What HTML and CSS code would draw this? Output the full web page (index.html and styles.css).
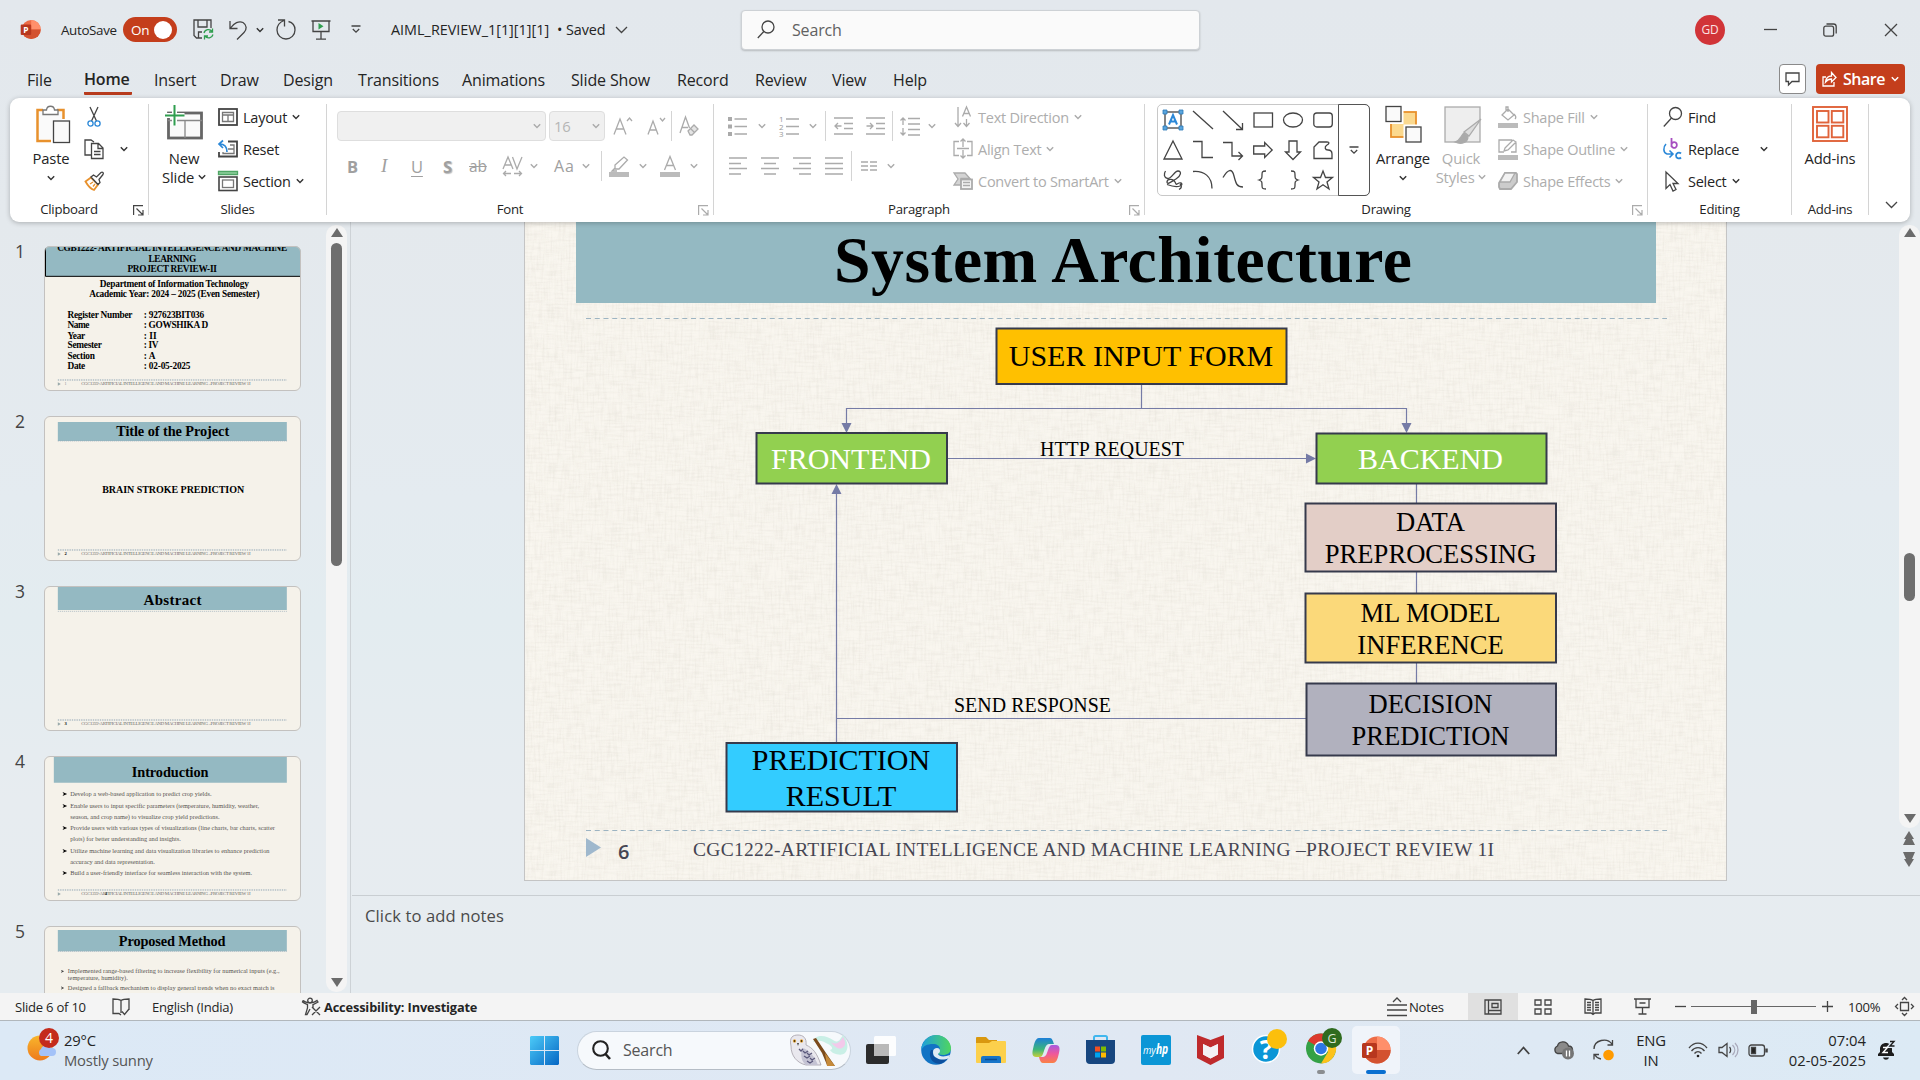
FILE: index.html
```html
<!DOCTYPE html>
<html lang="en">
<head>
<meta charset="utf-8">
<title>AIML_REVIEW_1 - PowerPoint</title>
<link rel="stylesheet" href="styles.css">
</head>
<body>
<svg class="defs" width="0" height="0">
  <symbol id="chev" viewBox="0 0 8 8"><path d="M.8 2.2 4 5.6 7.2 2.2"/></symbol>
  <symbol id="launch" viewBox="0 0 11 11"><path d="M.6 10V.6H10M3.5 3.5 10 10M10 5v5H5"/></symbol>
  <symbol id="pp" viewBox="0 0 30 30">
    <circle cx="16" cy="15" r="13.6" fill="#ed6c47"/><path d="M16 1.400a13.600 13.600 0 0 1 13.600 13.600H16z" fill="#ff8f6b"/><path d="M2.400 15h27.200a13.600 13.600 0 0 1-27.200 0z" fill="#d35230"/>
    <rect x="1" y="8" width="15" height="15" rx="1.500" fill="#b7371e"/><text x="8.500" y="19.500" text-anchor="middle" font-size="12" font-weight="700" fill="#fff">P</text>
  </symbol>
  <symbol id="foot" viewBox="0 0 770 34">
    <path d="M41 5H728" stroke="#8fa3b3" stroke-width="3" stroke-dasharray="4 3"/><path d="M41 12l9 5-9 5z" fill="#9aa"/>
    <text x="111" y="20" font-size="14.500" textLength="508" fill="#6f6c6a">CGC1222-ARTIFICIAL INTELLIGENCE AND MACHINE LEARNING –PROJECT REVIEW 1I</text>
  </symbol>
</svg>

<header class="titlebar">
  <svg width="21" height="21"><use href="#pp"/></svg>
  <span class="t13">AutoSave</span>
  <span class="toggle">On<i></i></span>
  <svg class="ic" width="21" height="21" viewBox="0 0 21 21"><path d="M9 19H3.500L1 16.500V1h17v8M5 1v7h9V1M5.500 19v-6H9"/><path d="M11 14a4.500 4.500 0 0 1 8-1.500M19.500 9.500V13H16M20 15.500a4.500 4.500 0 0 1-8 1.500M11.500 20.500V17H15" stroke="#2f9e4f"/></svg>
  <svg class="ic" width="19" height="20" viewBox="0 0 19 20"><path d="M1 1v7.500h7.500M1.500 8C5 3 10 .5 14 2.500c4 2.500 4 7 1 10L8 19.500"/></svg>
  <svg class="ic chev" width="8" height="8"><use href="#chev"/></svg>
  <svg class="ic" width="20" height="21" viewBox="0 0 20 21"><path d="M2 1h6.500v6.500M8 1.500C3 3.500 1 7 1 11a9 9 0 0 0 18 0c0-4-2.500-7.500-6.500-8.500"/></svg>
  <svg class="ic" width="20" height="20" viewBox="0 0 20 20"><path d="M.5 1h19M2 1v10.500h16V1M10 11.500V19M5 19.200h10"/><path d="M7.500 3v6.500l5-3.200z" fill="#2f9e4f" stroke="none"/></svg>
  <svg class="ic" width="10" height="9" viewBox="0 0 10 9"><path d="M.5 1h9M1.800 4 5 7.200 8.200 4"/></svg>
  <span class="t14 file">AIML_REVIEW_1[1][1][1]</span>
  <span class="t14">• Saved</span>
  <svg class="ic" width="13" height="8" viewBox="0 0 13 8"><path d="M1 1l5.500 5.500L12 1"/></svg>
  <div class="search"><svg class="ic" width="18" height="19" viewBox="0 0 18 19"><circle cx="11" cy="7" r="6"/><path d="M6.800 11.500.8 18"/></svg><span>Search</span></div>
  <span class="avatar">GD</span>
  <svg class="ic" width="13" height="4" viewBox="0 0 13 4"><path d="M0 1.500h13"/></svg>
  <svg class="ic" width="14" height="14" viewBox="0 0 14 14"><rect x=".8" y="3.200" width="9.800" height="10" rx="2"/><path d="M3.500 1h7a2.700 2.700 0 0 1 2.700 2.700V10.500"/></svg>
  <svg class="ic" width="14" height="14" viewBox="0 0 14 14"><path d="M1 1l12 12M13 1 1 13"/></svg>
</header>

<nav class="tabs">
  <span>File</span><span class="on">Home</span><span>Insert</span><span>Draw</span><span>Design</span><span>Transitions</span><span>Animations</span><span>Slide Show</span><span>Record</span><span>Review</span><span>View</span><span>Help</span>
  <button class="comment"><svg class="ic" width="15" height="14" viewBox="0 0 15 14"><path d="M1 1h13v8.500H7L3.500 13V9.500H1z"/></svg></button>
  <button class="share"><svg class="ic" width="15" height="16" viewBox="0 0 15 16"><path d="M4 6H1v9h11v-4M3.500 11c.5-4 3-6 6-6V1.500l4.500 5-4.500 4.500V8c-3 0-4.500 1-6 3z"/></svg><span>Share</span><svg class="ic chev" width="8" height="8"><use href="#chev"/></svg></button>
</nav>

<section class="ribbon">
  <div class="group g-clip">
    <div class="body">
      <div class="big"><svg class="ic" width="36" height="38" viewBox="0 0 36 38"><path d="M8 5H2.500v31H16M22 5h6.500v9" stroke="#e8912d" stroke-width="2.500"/><path d="M4 7h23v8h-9v19H4z" fill="#fafafa" stroke="none"/><path d="M8 9.500V5h3.500c.5-5 7.500-5 8 0H23v4.500z" fill="#fff" stroke="#777"/><rect x="18.500" y="16" width="16" height="21.500" fill="#fafafa"/></svg><span>Paste</span><svg class="ic chev" width="8" height="8"><use href="#chev"/></svg></div>
      <div class="rows3">
        <div><svg class="ic" width="20" height="20" viewBox="0 0 20 20"><path d="M6 0l6.500 14M14 0 7.500 14"/><circle cx="6.500" cy="16.500" r="2.600" stroke="#2b88d8"/><circle cx="13.500" cy="16.500" r="2.600" stroke="#2b88d8"/></svg></div>
        <div class="copyrow"><svg class="ic" width="20" height="20" viewBox="0 0 20 20"><path d="M7 16H1V1h6l3 2M7.500 4.500h7L19 9v10.500H7.500zM14 5v4.500h5M10 12.500h6.500M10 15.500h6.500"/></svg><svg class="ic chev" width="8" height="8"><use href="#chev"/></svg></div>
        <div><svg class="ic" width="20" height="20" viewBox="0 0 20 20"><path d="M1.500 10.500 7 6.500l7 7-4 5.500c-3-1-6-4-8.500-8.500z" fill="#fff" stroke="#e8912d" stroke-width="1.800"/><path d="M9 15.500 11 13M6 13l3-2" stroke="#e8912d"/><path d="M7 6l2.500-2 3 2L17 1.500c1.500-1 3 .5 2 2L15 8.500l1 3-2 2z" fill="#fff"/></svg></div>
      </div>
    </div>
    <div class="label"><span>Clipboard</span><svg class="ic" width="11" height="11"><use href="#launch"/></svg></div>
  </div>
  <i class="sep"></i>
  <div class="group g-slides">
    <div class="body">
      <div class="big"><svg class="ic" width="38" height="38" viewBox="0 0 38 38"><rect x="3.500" y="8" width="33" height="25" stroke="#666" stroke-width="2.800" fill="#fafafa"/><path d="M3 15.500h34M20 16v17" stroke="#888"/><path d="M0 10.500h19.500M9.500 0v20.500" stroke="#fff" stroke-width="5"/><path d="M0 10.500h19.500M9.500 0v20.500" stroke="#2f9e4f" stroke-width="2"/></svg><span>New</span><span>Slide <svg class="ic chev" width="8" height="8"><use href="#chev"/></svg></span></div>
      <div class="rows3 wide">
        <div><svg class="ic" width="20" height="18" viewBox="0 0 20 18"><rect x="1" y="1" width="18" height="16" stroke-width="1.800"/><path d="M4.500 4.500h11v9h-11zM4.500 7h11M10 7v6.500" stroke="#777"/></svg><span>Layout</span><svg class="ic chev" width="8" height="8"><use href="#chev"/></svg></div>
        <div><svg class="ic" width="20" height="18" viewBox="0 0 20 18"><path d="M10 1.500h9v15H1V12" stroke-width="1.800"/><path d="M12 5h4v8.500H5V12M10 9h6" stroke="#777"/><path d="M5 .5 1 4l4 4M1.500 4C6 4 9 6 9 12" stroke="#2b88d8" stroke-width="1.700"/></svg><span>Reset</span></div>
        <div><svg class="ic" width="20" height="20" viewBox="0 0 20 20"><path d="M.5.500h19v3H.5z" fill="#8fd19e" stroke="#4fa565"/><rect x="1" y="6" width="18" height="13.500" stroke-width="1.600"/><rect x="4.500" y="9" width="11" height="7.500" stroke="#777"/></svg><span>Section</span><svg class="ic chev" width="8" height="8"><use href="#chev"/></svg></div>
      </div>
    </div>
    <div class="label"><span>Slides</span></div>
  </div>
  <i class="sep"></i>
  <div class="group g-font off">
    <div class="body">
      <div class="frow f1">
        <div class="combo"><svg class="ic chev" width="8" height="8"><use href="#chev"/></svg></div>
        <div class="combo"><span>16</span><svg class="ic chev" width="8" height="8"><use href="#chev"/></svg></div>
        <svg class="ic" width="20" height="20" viewBox="0 0 20 20"><path d="M1 18.500 7 3l6 15.500M3 13h8M14 5l2.500-3L19 5"/></svg>
        <svg class="ic" width="19" height="20" viewBox="0 0 19 20"><path d="M1 18.500 6 5l5 13.500M3 14h6M13 2l2.500 3L18 2"/></svg>
        <i class="vs"></i>
        <svg class="ic" width="20" height="20" viewBox="0 0 20 20"><path d="M1 17 6.500 1l4 11M3 11.500h6"/><path d="M9 15l6-6 4 4-6 6h-2z" fill="#e4e4e4"/><path d="M11.500 12.500l4 4"/></svg>
      </div>
      <div class="frow f2">
        <b>B</b><em>I</em><u>U</u><b class="shadow">S</b><s>ab</s>
        <svg class="ic" width="21" height="21" viewBox="0 0 21 21"><path d="M1 13 6 1l5 12M3 9h6M10.500 1l4.500 12L20 1M4 15l-2.500 2.500L4 20M2 17.500h7M17 15l2.500 2.500L17 20M19 17.500h-7"/></svg>
        <svg class="ic chev" width="8" height="8"><use href="#chev"/></svg>
        <span class="aa">Aa</span><svg class="ic chev" width="8" height="8"><use href="#chev"/></svg>
        <i class="vs"></i>
        <svg class="ic" width="20" height="21" viewBox="0 0 20 21"><path d="M6 9l9-8 3.500 3L10 13H6zM6 12l-3 3h5"/><path d="M0 16h20v5H0z" fill="#bbb" stroke="none"/></svg>
        <svg class="ic chev" width="8" height="8"><use href="#chev"/></svg>
        <svg class="ic" width="20" height="21" viewBox="0 0 20 21"><path d="M4.500 14 10 .5 15.500 14M6.500 9.500h7"/><path d="M0 16h20v5H0z" fill="#bbb" stroke="none"/></svg>
        <svg class="ic chev" width="8" height="8"><use href="#chev"/></svg>
      </div>
    </div>
    <div class="label"><span>Font</span><svg class="ic" width="11" height="11"><use href="#launch"/></svg></div>
  </div>
  <i class="sep"></i>
  <div class="group g-para off">
    <div class="body">
      <div class="pleft">
        <div class="frow p1">
          <svg class="ic" width="19" height="20" viewBox="0 0 19 20"><path d="M6.500 3H19M6.500 10.500H19M6.500 18H19"/><path d="M0 1h4v4H0zM0 8.500h4v4H0zM0 16h4v4H0z" fill="#aaa" stroke="none"/></svg>
          <svg class="ic chev" width="8" height="8"><use href="#chev"/></svg>
          <svg class="ic" width="20" height="22" viewBox="0 0 20 22"><path d="M7 4H20M7 11.500H20M7 19H20"/><g class="num"><text x="0" y="7">1</text><text x="0" y="14.500">2</text><text x="0" y="22">3</text></g></svg>
          <svg class="ic chev" width="8" height="8"><use href="#chev"/></svg>
          <i class="vs"></i>
          <svg class="ic" width="19" height="18" viewBox="0 0 19 18"><path d="M0 1h19M10 6.500h9M10 11.500h9M0 17h19M7.500 9H1M4 6 1 9l3 3"/></svg>
          <svg class="ic" width="19" height="18" viewBox="0 0 19 18"><path d="M0 1h19M10 6.500h9M10 11.500h9M0 17h19M.5 9H7M4 6l3 3-3 3"/></svg>
          <i class="vs"></i>
          <svg class="ic" width="20" height="19" viewBox="0 0 20 19"><path d="M8 1.500h12M8 7h12M8 12.500h12M8 18h12M3 1v7M.5 3.500 3 1l2.500 2.500M3 18v-7M.5 15.500 3 18l2.500-2.500"/></svg>
          <svg class="ic chev" width="8" height="8"><use href="#chev"/></svg>
        </div>
        <div class="frow p2">
          <svg class="ic" width="18" height="18" viewBox="0 0 18 18"><path d="M0 1h18M0 6.500h12M0 11.500h18M0 17h12"/></svg>
          <svg class="ic" width="18" height="18" viewBox="0 0 18 18"><path d="M0 1h18M3 6.500h12M0 11.500h18M3 17h12"/></svg>
          <svg class="ic" width="18" height="18" viewBox="0 0 18 18"><path d="M0 1h18M6 6.500h12M0 11.500h18M6 17h12"/></svg>
          <svg class="ic" width="18" height="18" viewBox="0 0 18 18"><path d="M0 1h18M0 6.500h18M0 11.500h18M0 17h18"/></svg>
          <i class="vs"></i>
          <svg class="ic" width="16" height="10" viewBox="0 0 16 10"><path d="M0 1h7M0 5h7M0 9h7M9 1h7M9 5h7M9 9h7"/></svg>
          <svg class="ic chev" width="8" height="8"><use href="#chev"/></svg>
        </div>
      </div>
      <div class="rows3 wide">
        <div><svg class="ic" width="20" height="22" viewBox="0 0 20 22"><path d="M5 1v19M2 17l3 3.500L8 17M9.500 10.500 13.500 1l4 9.500M11 7.500h5M13.500 13v7M10.500 17l3 3.500 3-3.500"/></svg><span>Text Direction</span><svg class="ic chev" width="8" height="8"><use href="#chev"/></svg></div>
        <div><svg class="ic" width="20" height="20" viewBox="0 0 20 20"><path d="M6 2.500H1v14h5M14 2.500h5v14h-5M4 9.500h12M10 0v8M7.500 2.500 10 0l2.500 2.500M10 11v8M7.500 16.500 10 19l2.500-2.500"/></svg><span>Align Text</span><svg class="ic chev" width="8" height="8"><use href="#chev"/></svg></div>
        <div><svg class="ic" width="20" height="18" viewBox="0 0 20 18"><path d="M1 1h11l5 5.500H8V13H1l4-6z" fill="#d4d4d4"/><rect x="8" y="7.500" width="11" height="9.500" fill="#f4f4f4" stroke-width="1.800"/><path d="M10 10.500h7M10 13.500h7"/></svg><span>Convert to SmartArt</span><svg class="ic chev" width="8" height="8"><use href="#chev"/></svg></div>
      </div>
    </div>
    <div class="label"><span>Paragraph</span><svg class="ic" width="11" height="11"><use href="#launch"/></svg></div>
  </div>
  <i class="sep"></i>
  <div class="group g-draw">
    <div class="body">
      <div class="gallery">
        <div class="shapes">
          <svg class="ic" viewBox="0 0 20 20"><rect x="2" y="2" width="16" height="16"/><path d="M0 0h4v4H0zM16 0h4v4h-4zM0 16h4v4H0zM16 16h4v4h-4z" fill="#5aa6de" stroke="#2b79b8" stroke-width=".8"/><path d="M6 14.500 10 5l4 9.500M7.500 11.500h5" stroke="#2b88d8" stroke-width="2"/></svg>
          <svg class="ic" viewBox="0 0 20 20"><path d="M0 1l20 18"/></svg>
          <svg class="ic" viewBox="0 0 20 20"><path d="M0 1l19 18M19.500 13v6.500H13"/></svg>
          <svg class="ic" viewBox="0 0 20 20"><rect x="1" y="3" width="18.500" height="14"/></svg>
          <svg class="ic" viewBox="0 0 20 20"><ellipse cx="10" cy="10" rx="9.500" ry="7"/></svg>
          <svg class="ic" viewBox="0 0 20 20"><rect x=".8" y="3" width="18.500" height="14" rx="3"/></svg>
          <svg class="ic" viewBox="0 0 20 20"><path d="M10 1l9 18H1z"/></svg>
          <svg class="ic" viewBox="0 0 20 20"><path d="M0 1.500h9v16h11"/></svg>
          <svg class="ic" viewBox="0 0 20 20"><path d="M0 2.500h9V16h10M15.500 12l4 4-4 4"/></svg>
          <svg class="ic" viewBox="0 0 20 20"><path d="M.7 6h11V2.500l7.500 7.500-7.500 7.500V14H.7z"/></svg>
          <svg class="ic" viewBox="0 0 20 20"><path d="M6 1h8v11h3.500L10 19.500 2.500 12H6z"/></svg>
          <svg class="ic" viewBox="0 0 20 20"><path d="M1 18.500V7l5-5h8c3 0 2 2 0 3-3 2-2 5 1 5 3 0 4 2 4 4v4.500z"/></svg>
          <svg class="ic" viewBox="0 0 20 20"><path d="M2.500 1c-2 3-1.500 7 2 7.500C9 9 11 1 15 1s3 5-2 8-9 6-9 3 6-4 8 0 1 2 4 1 4 2 1 3-9 0-13-1.500M17 14c2 2 2 4-1 5.500"/></svg>
          <svg class="ic" viewBox="0 0 20 20"><path d="M0 1.500c11-1 19 5 19 17"/></svg>
          <svg class="ic" viewBox="0 0 20 20"><path d="M0 7.500C5-1 9-2 11 6s3 11 9 11"/></svg>
          <svg class="ic" viewBox="0 0 20 20"><path d="M13 1c-4 0-4 1-4 4s0 4-3 5c3 1 3 2 3 5s0 4 4 4"/></svg>
          <svg class="ic" viewBox="0 0 20 20"><path d="M8 1c4 0 4 1 4 4s0 4 3 5c-3 1-3 2-3 5s0 4-4 4"/></svg>
          <svg class="ic" viewBox="0 0 20 20"><path d="M10 1l2.500 6.500H19.500L14 12l2 7-6-4.200L4 19l2-7L.5 7.500h7z"/></svg>
        </div>
        <div class="more"><svg class="ic" width="10" height="9" viewBox="0 0 10 9"><path d="M.5 1h9M1.800 4 5 7.200 8.200 4"/></svg></div>
      </div>
      <div class="big arr"><svg class="ic" width="37" height="38" viewBox="0 0 37 38"><rect x="6" y="7" width="25" height="25" fill="#fbd98f" stroke="#e8912d" stroke-width="1.800"/><rect x="1" y="1.500" width="15" height="15" fill="#fafafa" stroke="#fff" stroke-width="5"/><rect x="1" y="1.500" width="15" height="15" fill="#fafafa"/><rect x="21" y="22" width="15" height="15" fill="#fafafa" stroke="#fff" stroke-width="5"/><rect x="21" y="22" width="15" height="15" fill="#fafafa"/></svg><span>Arrange</span><svg class="ic chev" width="8" height="8"><use href="#chev"/></svg></div>
      <div class="big quick off"><svg class="ic" width="38" height="40" viewBox="0 0 38 40"><rect x="1" y="2" width="35" height="35" fill="#eee"/><path d="M37 14 25 31l-5-4z" fill="#ddd"/><path d="M20 28c-3 2-3 7-9 9 6 3 13 1 13-6z" fill="#aaa"/></svg><span>Quick</span><span>Styles <svg class="ic chev" width="8" height="8"><use href="#chev"/></svg></span></div>
      <div class="rows3 wide off">
        <div><svg class="ic" width="20" height="22" viewBox="0 0 20 22"><path d="M4 9l6-6 6 6-6 5zM8 5V1h2v5M16 8c2 2 2 4 1 5"/><path d="M0 17h20v5H0z" fill="#bbb" stroke="none"/></svg><span>Shape Fill</span><svg class="ic chev" width="8" height="8"><use href="#chev"/></svg></div>
        <div><svg class="ic" width="20" height="22" viewBox="0 0 20 22"><path d="M14 2H1v12h5M18 5v9h-5M7 10l8-8 3 2-8 8-4 1z"/><path d="M0 17h20v5H0z" fill="#bbb" stroke="none"/></svg><span>Shape Outline</span><svg class="ic chev" width="8" height="8"><use href="#chev"/></svg></div>
        <div><svg class="ic" width="20" height="20" viewBox="0 0 20 20"><path d="M7 2h11l1 1v8l-6 7H2l-1-2v-4z" fill="#ccc" stroke-width="1.800"/><path d="M7 2h10l-5 9H2z" fill="#f2f2f2"/></svg><span>Shape Effects</span><svg class="ic chev" width="8" height="8"><use href="#chev"/></svg></div>
      </div>
    </div>
    <div class="label"><span>Drawing</span><svg class="ic lt" width="11" height="11"><use href="#launch"/></svg></div>
  </div>
  <i class="sep"></i>
  <div class="group g-edit">
    <div class="body">
      <div class="rows3 wide">
        <div><svg class="ic" width="20" height="20" viewBox="0 0 20 20"><circle cx="12.500" cy="6.500" r="6"/><path d="M8.500 11 .8 19.500"/></svg><span>Find</span></div>
        <div><svg class="ic" width="20" height="22" viewBox="0 0 20 22"><path d="M8.500 0v9M8.500 6.500a2.700 2.900 0 1 1 0 1" stroke="#a74fc0" stroke-width="1.800"/><path d="M18 15.500c-2-2-5-.5-5 2s3 4 5 2" stroke="#2b88d8" stroke-width="1.800"/><path d="M3 6c-3 3-3 9 1 10h5M6.500 12.500 10 16l-3.500 3.500" stroke="#2b88d8" stroke-width="1.600"/></svg><span>Replace</span><svg class="ic chev rep" width="8" height="8"><use href="#chev"/></svg></div>
        <div><svg class="ic" width="20" height="21" viewBox="0 0 20 21"><path d="M3 1v16.500l4-4 3 6.500 3-1.500-3-6h5z"/></svg><span>Select</span><svg class="ic chev" width="8" height="8"><use href="#chev"/></svg></div>
      </div>
    </div>
    <div class="label"><span>Editing</span></div>
  </div>
  <i class="sep"></i>
  <div class="group g-add">
    <div class="body">
      <div class="big"><svg class="ic" width="36" height="38" viewBox="0 0 36 38"><g stroke="#e0633a" stroke-width="1.900"><rect x="1" y="2" width="34" height="34"/><rect x="5" y="6" width="11.500" height="11.500"/><rect x="19.800" y="6" width="11.500" height="11.500"/><rect x="5" y="20.800" width="11.500" height="11.500"/><rect x="19.800" y="20.800" width="11.500" height="11.500"/></g></svg><span>Add-ins</span></div>
    </div>
    <div class="label"><span>Add-ins</span></div>
  </div>
  <i class="sep"></i>
  <div class="collapse"><svg class="ic" width="13" height="8" viewBox="0 0 13 8"><path d="M1 1l5.500 5.500L12 1"/></svg></div>
</section>

<main class="work">
  <aside class="panel">
    <div class="list">
      <div class="item"><span>1</span><svg class="thumb" viewBox="0 0 770 435">
        <g transform="translate(-133 -78)"><path d="M133 78h770v91H133z" fill="#94b9c2"/><path d="M137 85v84h766" fill="none" stroke="#000" stroke-width="3"/>
        <g class="bt" font-size="28"><text x="172" y="93" textLength="690">CGB1222- ARTIFICIAL INTELLIGENCE AND MACHINE</text><text x="446" y="125" textLength="143">LEARNING</text><text x="383" y="155" textLength="268">PROJECT REVIEW-II</text>
        <text x="300" y="200" textLength="447">Department of Information Technology</text><text x="268" y="230" textLength="511">Academic Year: 2024 – 2025 (Even Semester)</text>
        <text x="203" y="293" textLength="195">Register Number</text><text x="432" y="293" textLength="181">: 927623BIT036</text><text x="203" y="323" textLength="66">Name</text><text x="432" y="323" textLength="193">: GOWSHIKA D</text><text x="203" y="356" textLength="53">Year</text><text x="432" y="356">: II</text><text x="203" y="383" textLength="103">Semester</text><text x="432" y="383" textLength="44">: IV</text><text x="203" y="416" textLength="82">Section</text><text x="432" y="416">: A</text><text x="203" y="446" textLength="53">Date</text><text x="432" y="446" textLength="140">: 02-05-2025</text></g></g>
        <use href="#foot" y="397" width="770" height="34"/><text x="61" y="417" font-size="12" fill="#888">1</text></svg></div>
      <div class="item"><span>2</span><svg class="thumb" viewBox="0 0 770 435"><path d="M41 18h687v57H41z" fill="#94b9c2"/><path d="M41 75H728" stroke="#8fa3b3" stroke-width="2" stroke-dasharray="3 3"/><g class="bt"><text x="216" y="60" font-size="43" textLength="339">Title of the Project</text><text x="174" y="231" font-size="30" textLength="426">BRAIN STROKE PREDICTION</text><text x="61" y="417" font-size="14">2</text></g><use href="#foot" y="397" width="770" height="34"/></svg></div>
      <div class="item"><span>3</span><svg class="thumb" viewBox="0 0 770 435"><path d="M41 0h687v72H41z" fill="#94b9c2"/><path d="M41 76H728" stroke="#8fa3b3" stroke-width="2" stroke-dasharray="3 3"/><g class="bt"><text x="298" y="58" font-size="45" textLength="174">Abstract</text><text x="61" y="417" font-size="14">3</text></g><use href="#foot" y="397" width="770" height="34"/></svg></div>
      <div class="item"><span>4</span><svg class="thumb" viewBox="0 0 770 435"><path d="M29 0h699v80H29z" fill="#94b9c2"/><text class="bt" x="263" y="64" font-size="43" textLength="230">Introduction</text>
        <g class="st" font-size="19"><text x="78" y="120" textLength="424">Develop a web-based application to predict crop yields.</text><text x="78" y="156" textLength="567">Enable users to input specific parameters (temperature, humidity, weather,</text><text x="78" y="189" textLength="448">season, and crop name) to visualize crop yield predictions.</text><text x="78" y="222" textLength="614">Provide users with various types of visualizations (line charts, bar charts, scatter</text><text x="78" y="255" textLength="332">plots) for better understanding and insights.</text><text x="78" y="291" textLength="598">Utilize machine learning and data visualization libraries to enhance prediction</text><text x="78" y="324" textLength="254">accuracy and data representation.</text><text x="78" y="357" textLength="546">Build a user-friendly interface for seamless interaction with the system.</text></g>
        <path d="M55 108l14 6-14 6 4-6zM55 144l14 6-14 6 4-6zM55 210l14 6-14 6 4-6zM55 279l14 6-14 6 4-6zM55 345l14 6-14 6 4-6z"/><text class="bt" x="182" y="417" font-size="14">4</text><use href="#foot" y="397" width="770" height="34"/></svg></div>
      <div class="item"><span>5</span><svg class="thumb" viewBox="0 0 770 435"><path d="M41 12h687v64H41z" fill="#94b9c2"/><path d="M41 76H728" stroke="#8fa3b3" stroke-width="2" stroke-dasharray="3 3"/><text class="bt" x="224" y="61" font-size="43" textLength="320">Proposed Method</text>
        <g class="st" font-size="19"><text x="71" y="142" textLength="635">Implemented range-based filtering to increase flexibility for numerical inputs (e.g.,</text><text x="71" y="162" textLength="180">temperature, humidity).</text><text x="71" y="192" textLength="620">Designed a fallback mechanism to display general trends when no exact match is</text></g><path d="M50 131l10 5-10 5 3-5zM50 181l10 5-10 5 3-5z" fill="#444"/></svg></div>
    </div>
    <div class="sbar left"><svg width="12" height="9" viewBox="0 0 12 9"><path d="M6 0l6 9H0z"/></svg><i></i><svg class="end" width="12" height="9" viewBox="0 0 12 9"><path d="M6 9 0 0h12z"/></svg></div>
  </aside>
  <section class="editor">
    <div class="stage">
      <svg class="slide" width="1201" height="658" viewBox="525 222 1201 658">
        <path d="M576 222h1080v81H576z" fill="#94b9c2"/>
        <text x="834" y="281.500" font-size="65.700" font-weight="700" textLength="578">System Architecture</text>
        <path d="M586 318.500H1667M586 830.500H1667" stroke="#9db4c2" stroke-dasharray="5 3.750"/>
        <g fill="none" stroke="#757ba6" stroke-width="1.200"><path d="M1141.500 385v23.500M846.500 424v-15.500h560v15.500M948 458.500h360M836.500 742V492M836.500 718.500H1306M1416.500 484v20M1416.500 572v22M1416.500 663v20"/></g>
        <path d="M841.500 423h10l-5 10zM1401.500 423h10l-5 10zM1306 453.500v10l10-5zM831.500 494h10l-5-10z" fill="#757ba6"/>
        <g stroke="#363a4c" stroke-width="2"><rect x="996.500" y="328.500" width="290" height="55.500" fill="#ffc000"/><rect x="756.500" y="433" width="190.500" height="50.500" fill="#92d050"/><rect x="1316.500" y="433.500" width="230" height="50" fill="#92d050"/><rect x="1305.500" y="503.500" width="250.500" height="68" fill="#e3cec7"/><rect x="1305.500" y="593.500" width="250.500" height="69" fill="#fbd97a"/><rect x="1306.500" y="683.500" width="249.500" height="72" fill="#b1b1be"/><rect x="726.500" y="743" width="230.500" height="68.500" fill="#33ccff"/></g>
        <g text-anchor="middle" font-size="30"><text x="1141" y="366">USER INPUT FORM</text><text x="851" y="469" fill="#fff">FRONTEND</text><text x="1430.500" y="469" fill="#fff">BACKEND</text><text x="841" y="770">PREDICTION</text><text x="841" y="806">RESULT</text></g>
        <g text-anchor="middle" font-size="26.600"><text x="1430.500" y="531">DATA</text><text x="1430.500" y="563">PREPROCESSING</text><text x="1430.500" y="622">ML MODEL</text><text x="1430.500" y="654">INFERENCE</text><text x="1430.500" y="713">DECISION</text><text x="1430.500" y="745">PREDICTION</text></g>
        <text x="1040" y="456" font-size="19.900" textLength="144">HTTP REQUEST</text><text x="954" y="712" font-size="19.900" textLength="157">SEND RESPONSE</text>
        <path d="M586 838l15 9.500-15 9.500z" fill="#9fb8cd"/><text class="pg" x="618" y="859" font-size="20">6</text>
        <text x="693" y="856" font-size="19.500" textLength="801" fill="#464653">CGC1222-ARTIFICIAL INTELLIGENCE AND MACHINE LEARNING –PROJECT REVIEW 1I</text>
      </svg>
      <div class="rscroll">
        <div class="sbar right"><svg width="12" height="9" viewBox="0 0 12 9"><path d="M6 0l6 9H0z"/></svg><i></i><svg class="end" width="12" height="9" viewBox="0 0 12 9"><path d="M6 9 0 0h12z"/></svg></div>
        <svg class="dbl" width="12" height="36" viewBox="0 0 12 36"><path d="M6 0l5 8H9l3 6H0l3-6H1zM6 36l-5-8h2L0 21h12l-3 7h2z"/></svg>
      </div>
    </div>
    <div class="notes">Click to add notes</div>
  </section>
</main>

<footer class="status">
  <span>Slide 6 of 10</span>
  <svg class="ic" width="18" height="18" viewBox="0 0 18 18"><path d="M9 15V2.500C7 1 4 1 1 1v14.500h6l2 1.500M9 2.500C11 1 14 1 17 1v11M10 13.500l2.500 3L17 11"/></svg>
  <span>English (India)</span>
  <svg class="ic" width="19" height="19" viewBox="0 0 19 19"><circle cx="8" cy="3.500" r="2.300"/><path d="M1 3.500c3 3 11 3 14 0l1 1.500c-2 1.500-4 2-5 2.500v3M1 3.500 .5 5C3 7 5 7 5.500 7.500V11l-2 6.500H5L8 12M10 10l8 8M18 10l-8 8"/></svg>
  <b>Accessibility: Investigate</b>
  <svg class="ic" width="20" height="20" viewBox="0 0 20 20"><path d="M6 5l4-4 4 4M0 8h20M0 13h20M0 18.500h20"/></svg>
  <span>Notes</span>
  <div class="view"><svg class="ic" width="18" height="16" viewBox="0 0 18 16"><path d="M1 1h16v14H1zM4.500 1v14M4.500 11.500H17M8 4.500h6v4H8z"/></svg></div>
  <svg class="ic" width="18" height="16" viewBox="0 0 18 16"><path d="M1 1h6v5H1zM11 1h6v5h-6zM1 10h6v5H1zM11 10h6v5h-6z"/></svg>
  <svg class="ic" width="18" height="17" viewBox="0 0 18 17"><path d="M9 2.500C7 1 4 1 1 1v14h6l2 1.500 2-1.500h6V1c-3 0-6 0-8 1.500zM9 2v14M3 4.500h4M3 7h4M3 9.500h4M3 12h4M11 4.500h4M11 7h4M11 9.500h4M11 12h4"/></svg>
  <svg class="ic" width="17" height="17" viewBox="0 0 17 17"><path d="M0 1h17M2 1v8.500h13V1M5.500 5h6M8.500 9.500V16M4.500 16h8"/></svg>
  <svg class="ic" width="11" height="11" viewBox="0 0 11 11"><path d="M0 5.500h11"/></svg>
  <div class="zoom"><i></i></div>
  <svg class="ic" width="11" height="11" viewBox="0 0 11 11"><path d="M0 5.500h11M5.500 0v11"/></svg>
  <span>100%</span>
  <svg class="ic" width="19" height="19" viewBox="0 0 19 19"><path d="M5.500 5.500h8v8h-8zM7 3l2.500-2.500L12 3M7 16l2.500 2.500L12 16M3 7 .5 9.500 3 12M16 7l2.500 2.500L16 12"/></svg>
</footer>

<footer class="taskbar">
  <svg width="32" height="36" viewBox="0 0 32 36"><defs><linearGradient id="sun" x2="0" y2="1"><stop stop-color="#f8b62c"/><stop offset="1" stop-color="#ee7a1c"/></linearGradient><linearGradient id="w" x2="1" y2="1"><stop stop-color="#4ccbf8"/><stop offset="1" stop-color="#0667c4"/></linearGradient></defs><circle cx="12" cy="20" r="12.500" fill="url(#sun)"/><path d="M13 28a4 4 0 0 1 0-7 6 5.500 0 0 1 11-1 4 4 0 0 1 0 8z" fill="#a3c2f8"/><circle cx="21" cy="10" r="10" fill="#c42b1c"/><text x="21" y="15" text-anchor="middle" font-size="14" fill="#fff">4</text></svg>
  <div class="weather"><span>29°C</span><span>Mostly sunny</span></div>
  <svg width="29" height="29" viewBox="0 0 29 29"><path d="M1 0h13v14H0V1zM15 0h13l1 1v13H15zM0 15h14v14H1l-1-1zM15 15h14v13l-1 1H15z" fill="url(#w)"/></svg>
  <div class="pill"><svg class="ic" width="19" height="20" viewBox="0 0 19 20"><circle cx="8.500" cy="8.500" r="7.300" stroke-width="2.100"/><path d="M13.500 14l4.500 5" stroke-width="2.600"/></svg><span>Search</span>
    <svg width="58" height="33" viewBox="0 0 58 33"><path d="M23 8C26-1 37 2 43 6s7-1 10-5c5 6 6 14 2 18s-14 0-15-3c4-1 2-4-2-6S30 5 23 8z" fill="#c9efe6"/><path d="M41 8c4 3 8 2 12-5 3 5 3 9-1 11s-8-2-11-6z" fill="#f3c9ea"/><path d="M23 5l3-1 12 18 7 10-8-1-5-12z" fill="#7b4b1d"/><path d="M35 19l10 13-8 0z" fill="#c58a3a"/><path d="M1 12C-1 3 3 1 8 1s9 3 8 10c7 3 11 8 15 20H16C7 29 1 22 1 12z" fill="#e9e8ee" stroke="#a4a0a8" stroke-width=".8"/><path d="M12 14c6 1 12 7 16 17H16c-4-3-6-9-4-17z" fill="#c4c3d3"/><path d="M13 17l2 2 3-2M17 19l2 2 3-2M14 22l3 2 3-2M20 24l2 2 3-2M17 27l3 2 3-2M9 15l2 2 2-2" fill="none" stroke="#5b597c" stroke-width="1.300"/><circle cx="4.500" cy="7" r="1.700" fill="#e7a93c"/><circle cx="11.500" cy="7" r="1.700" fill="#e7a93c"/><circle cx="4.500" cy="7" r=".8"/><circle cx="11.500" cy="7" r=".8"/><path d="M7 9h2l-1 3z" fill="#444"/></svg></div>
  <svg width="31" height="31" viewBox="0 0 31 31"><rect x="0" y="9" width="23" height="20" rx="2" fill="#2c2c2c"/><rect x="8" y="1" width="22" height="20" rx="1.500" fill="#fff" opacity=".9"/><path d="M8 9h15v12H8z" fill="#b9b9b9"/></svg>
  <svg width="30" height="30" viewBox="0 0 30 30"><defs><linearGradient id="e1" x2="1"><stop stop-color="#1f9fdc"/><stop offset="1" stop-color="#4fd65f"/></linearGradient></defs><circle cx="15" cy="15" r="14.800" fill="#1273c4"/><path d="M.5 12C3 4 9 0 15 0c9 0 15 7 15 13 0 5-4 7-8 7-3 0-5-1-5-2 0-1 2-1 2-4 0-3-3-5-7-5-6 0-10 2-11.500 6z" fill="url(#e1)"/><path d="M10 15c-3 5 0 14 9 14 3-1 6-3 8-6-4 2-17 3-15-8z" fill="#0c4f9e"/><path d="M12 17c0-3 2-4 4-4s3 1 3 3-2 2-2 3c1 3 7 3 12 1l-1 3c-4 2-9 2-12 0-3-1-4-3-4-6z" fill="#dfe9f4"/></svg>
  <svg width="30" height="28" viewBox="0 0 30 28"><path d="M0 2q0-1 1-1h9l3 3h8v5H0z" fill="#d9980f"/><path d="M0 7h13l3-2h13q1 0 1 1v20q0 1-1 1H1q-1 0-1-1z" fill="#fcd04c"/><path d="M5 27v-5q0-2 2-2h16q2 0 2 2v5z" fill="#1775c9"/><path d="M9 23.500h12" stroke="#0a4d95" stroke-width="1.500"/></svg>
  <svg width="28" height="27" viewBox="0 0 28 27"><defs><linearGradient id="c1" x2="0" y2="1"><stop stop-color="#1d7fd8"/><stop offset=".6" stop-color="#3bb67a"/><stop offset="1" stop-color="#c6cf3b"/></linearGradient><linearGradient id="c2" x2="0" y2="1"><stop stop-color="#a65be0"/><stop offset=".5" stop-color="#f0589a"/><stop offset="1" stop-color="#fa8145"/></linearGradient></defs><path d="M7 1h11c2 0 3 3 4 6h-5c-3 0-4 4-5 7s-2 6-4 6H4c-4 0-4-4-3-8S3 1 7 1z" fill="url(#c1)"/><path d="M21 26H11c-2 0-3-2-4-6h4c3 0 4-4 5-7s2-5 4-5h4c4 0 4 4 3 8s-2 10-6 10z" fill="url(#c2)"/></svg>
  <svg width="30" height="30" viewBox="0 0 30 30"><path d="M8 6V2.500Q8 1 9.500 1h10Q21 1 21 2.500V6" fill="none" stroke="#41b7ee" stroke-width="2"/><path d="M0 5h29v20q0 4-4 4H4q-4 0-4-4z" fill="#17467f"/><path d="M9 11.500h5v5H9z" fill="#f25022"/><path d="M15 11.500h5v5h-5z" fill="#7fba00"/><path d="M9 17.500h5v5H9z" fill="#00a4ef"/><path d="M15 17.500h5v5h-5z" fill="#ffb900"/></svg>
  <svg width="30" height="30" viewBox="0 0 30 30"><rect width="30" height="30" rx="2" fill="#0b96d6"/><text x="2" y="18.500" font-size="10" font-style="italic" fill="#fff" textLength="12.500" lengthAdjust="spacingAndGlyphs">my</text><text x="15" y="19" font-size="14" font-weight="700" font-style="italic" fill="#fff" textLength="12" lengthAdjust="spacingAndGlyphs">hp</text></svg>
  <svg width="27" height="30" viewBox="0 0 27 30"><path d="M0 0l13.500 5L27 0v23l-13.500 7L0 23zM6 9v10.500l7.500 4 7.500-4V9l-7.500 3.500z" fill="#bf2a2c" fill-rule="evenodd"/><path d="M6 9l7.500 3.500L21 9v10.500l-7.500 4-7.500-4z" fill="#f4f0f3"/></svg>
  <svg class="lift" width="36" height="35" viewBox="0 0 36 35"><circle cx="14" cy="20" r="13.500" fill="#0b96d6" stroke="#fff" stroke-width="1.500"/><text x="14" y="30" text-anchor="middle" font-size="27" font-weight="700" fill="#fff">?</text><circle cx="25" cy="10" r="10" fill="#fcbf0c"/></svg>
  <div class="chrome"><svg width="37" height="36" viewBox="0 0 37 36"><circle cx="15" cy="20.500" r="15" fill="#34a146"/><path d="M15 20.500 2 13a15 15 0 0 1 26 0z" fill="#dc3a2e"/><path d="M28 13a15 15 0 0 1-13 22.500l7-11.500-4-11z" fill="#fcc21b"/><circle cx="15" cy="20.500" r="7.200" fill="#fff"/><circle cx="15" cy="20.500" r="5.800" fill="#2d77e5"/><circle cx="26" cy="10" r="10" fill="#2f6b1f"/><text x="26" y="14.500" text-anchor="middle" font-size="12.500" fill="#dce8d8">G</text></svg><i></i></div>
  <div class="running"><svg width="30" height="30"><use href="#pp"/></svg><i></i></div>
  <svg class="ic" width="13" height="9" viewBox="0 0 13 9"><path d="M.8 8l5.700-6.500L12.200 8" stroke-width="1.800"/></svg>
  <svg class="ic" width="21" height="20" viewBox="0 0 21 20"><path d="M4.500 13.500a4 4 0 0 1 0-7.500c1-5 9-6 11 0 5 0 5 7 2 7.500z" fill="#8a8a8a"/><circle cx="15" cy="13.500" r="6" fill="#757575" stroke="none"/><path d="M13.500 10.500v6M16.500 10.500v6" stroke="#fff"/></svg>
  <svg class="ic" width="21" height="22" viewBox="0 0 21 22"><path d="M1 10C1 1 14-2 19 5M19.500 1v5h-5M8 20c-3-.5-5-2-6-4M1 20.500V15.500h5"/><circle cx="15.500" cy="16" r="5.300" fill="#ff9a00" stroke="none"/></svg>
  <div class="lang"><span>ENG</span><span>IN</span></div>
  <svg class="ic" width="20" height="16" viewBox="0 0 20 16"><path d="M1 6C6-.5 14-.5 19 6M3.500 9c3.500-4.500 9.500-4.500 13 0M6.500 11.500c2-2.500 5-2.500 7 0"/><circle cx="10" cy="14" r="1.300" fill="#222" stroke="none"/></svg>
  <svg class="ic" width="20" height="16" viewBox="0 0 20 16"><path d="M1 5.500h3L9 1.500v13L4 10.500H1zM11.500 5c1.500 1.500 1.500 4.500 0 6"/><path d="M14.500 3c3 3 3 7 0 10M17 1c4 4 4 10 0 14" stroke="#aab"/></svg>
  <svg class="ic" width="20" height="13" viewBox="0 0 20 13"><rect x="1" y="1" width="15.500" height="11" rx="2.500"/><path d="M3.500 3.500h4v6h-4z" fill="#222"/><path d="M18.500 4.500v4" stroke-width="2.500"/></svg>
  <div class="clock"><span>07:04</span><span>02-05-2025</span></div>
  <svg width="18" height="20" viewBox="0 0 18 20"><path d="M0 16v-2l2-2V9c0-8 12-8 12 0v3l2 2v2zM5 17.500h6c-1 3-5 3-6 0z" fill="#1d1d1d"/><path d="M12 1.500h4l-4 4.500h4.500" fill="none" stroke="#dfeaf5" stroke-width="4"/><path d="M5 7.500h4.500l-4.500 5h5" fill="none" stroke="#fff" stroke-width="1.400"/><path d="M12 1.500h4l-4 4.500h4.500" fill="none" stroke="#1d1d1d" stroke-width="1.400"/></svg>
</footer>
</body>
</html>
```
FILE: styles.css
```css
* { box-sizing: border-box; }
body {
  margin: 0;
  width: 1920px;
  height: 1080px;
  overflow: hidden;
  display: flex;
  flex-direction: column;
  font-family: "Open Sans", "Noto Sans", sans-serif;
  font-size: 14.8px;
  letter-spacing: -0.15px;
  color: #242424;
  white-space: nowrap;
  background: linear-gradient(#e3e8ed 0, #e4e9ed 220px, #e4ebf0 500px, #e3ecf0 620px, #e7ecf0 800px, #e6ecf0 993px);
}
svg { display: block; flex: none; overflow: visible; }
.defs { position: absolute; }
.ic { fill: none; stroke: #444; stroke-width: 1.3; }
.chev { stroke: #333; stroke-width: 1.4; }
i { display: block; }

/* title bar */
.titlebar {
  height: 60px;
  flex: none;
  padding: 0 0 1px 20px;
  display: grid;
  grid-template-columns: 41px 62px 70px 36px 27px 20px 35px 40px 40px 166px 58px 126px 954px 69px 59px 61px 36px;
  align-items: center;
  justify-items: start;
}
.t13 { font-size: 13.4px; letter-spacing: -0.35px; }
.t14 { font-size: 14.4px; letter-spacing: -0.1px; }
.file { letter-spacing: 0; }
.toggle {
  width: 54px; height: 25px;
  padding: 0 5px 0 8px;
  display: flex; align-items: center; justify-content: space-between;
  border-radius: 13px;
  background: #c43e1c; color: #fff; font-size: 13.5px;
}
.toggle i { width: 18px; height: 18px; border-radius: 50%; background: #fff; }
.search {
  width: 459px; height: 40px;
  padding-left: 15px;
  display: flex; align-items: center; gap: 17px;
  border: 1px solid #cdd1d5; border-radius: 4px;
  background: #fafafa; color: #616161; font-size: 16px;
  box-shadow: 0 1px 2px rgba(0, 0, 0, .2);
}
.avatar {
  width: 30px; height: 30px; border-radius: 50%;
  display: flex; align-items: center; justify-content: center;
  background: #d13438; color: #fbe3e3; font-size: 12px;
}

/* ribbon tabs */
.tabs {
  height: 38px;
  flex: none;
  padding: 0 0 0 27px;
  display: grid;
  grid-template-columns: 57px 70px 66px 63px 75px 104px 109px 106px 78px 77px 61px 886px 37px 89px;
  align-items: center;
  justify-items: start;
  font-size: 16px;
}
.tabs > span { height: 34px; line-height: 36px; }
.tabs > .on { font-weight: 600; letter-spacing: -0.15px; width: 48px; height: 35px; border-bottom: 3px solid #b83b1d; border-radius: 1px; align-self: start; line-height: 38px; }
.tabs button { height: 30px; padding: 0; border-radius: 4px; display: flex; align-items: center; justify-content: center; font: inherit; }
.comment { width: 27px; border: 1px solid #8a8a8a; background: #fff; }
.share { width: 89px; gap: 6px; border: 0; background: #c43e1c; color: #fff; }
.share span { font-weight: 600; letter-spacing: -0.5px; }
.share .ic { stroke: #fff; }

/* ribbon */
.ribbon {
  position: relative; z-index: 2;
  height: 124px;
  flex: none;
  margin: 0 10px;
  display: flex;
  border-radius: 9px;
  background: #fff;
  box-shadow: 0 1px 5px rgba(0, 0, 0, .25);
}
.sep { width: 1px; height: 111px; margin-top: 6px; background: #d4d4d4; }
.group { padding-top: 4px; display: grid; grid-template-rows: 96px 24px; }
.body { display: flex; }
.label { display: flex; align-items: center; justify-content: center; font-size: 13.2px; letter-spacing: -0.25px; }
.label span { flex: 1; padding-bottom: 2px; text-align: center; }
.label .ic { margin: 0 4px 0 5px; stroke-width: 1.2; }
.off { color: #adadad; }
.off .label { color: #242424; }
.off .ic, .label .lt { stroke: #ababab; }
.big { padding-top: 3px; display: flex; flex-direction: column; align-items: center; line-height: 20px; }
.big > span { height: 19px; }
.big > svg + span { margin-top: 5px; }
.big > .chev { margin-top: 7px; }
.big span svg { display: inline-block; vertical-align: 2px; }
.rows3 { display: grid; grid-template-rows: repeat(3, 32px); }
.rows3 > div { padding-bottom: 2px; display: flex; align-items: center; gap: 5px; }
.wide { font-size: 14.5px; letter-spacing: -0.25px; }
.frow { height: 40px; display: grid; align-items: center; justify-items: start; }
.vs { width: 1px; height: 30px; background: #d4d4d4; }

.g-clip { width: 138px; }
.g-clip .big { width: 48px; margin-left: 17px; }
.g-clip .big > svg:first-child { margin-left: 4px; }
.g-clip .rows3 { margin-left: 9px; }
.copyrow .chev { margin-left: 11px; }
.g-slides { width: 177px; }
.g-slides .big { width: 54px; margin-left: 8px; }
.g-slides .rows3 { margin-left: 7px; }
.g-font { width: 386px; }
.g-font .body { padding: 4px 0 0 10px; flex-direction: column; }
.f1 { grid-template-columns: 212px 64px 34px 24px 8px 20px; }
.combo { width: 209px; height: 30px; padding: 0 4px; display: flex; align-items: center; justify-content: flex-end; border: 1px solid #dedede; border-radius: 4px; background: #f0f0f0; }
.combo + .combo { width: 56px; justify-content: space-between; color: #b5b5b5; }
.f2 { padding-left: 10px; grid-template-columns: 34px 30px 32px 26px 33px 28px 24px 28px 19px 8px 30px 21px 30px 8px; font-size: 16.500px; color: #a0a0a0; }
.f2 em { font-family: "Liberation Serif", serif; font-size: 19px; }
.f2 u { text-underline-offset: 3px; }
.f2 s { font-size: 15.5px; }
.shadow { text-shadow: 1px 1px 1px #bbb; }
.aa { letter-spacing: .8px; font-size: 16px; }
.num text { font-size: 8px; fill: #999; stroke: none; }
.g-para { width: 430px; }
.pleft { width: 239px; padding: 4px 0 0 14px; }
.p1 { grid-template-columns: 30px 21px 30px 16px 9px 32px 26px 8px 28px 8px; }
.p2 { padding-left: 1px; grid-template-columns: 32px 32px 32px 26px 10px 26px 8px; }
.g-draw { width: 502px; }
.gallery { width: 213px; height: 92px; margin: 2px 0 0 12px; display: flex; border: 1px solid #c8c8c8; border-radius: 5px; }
.shapes { width: 181px; display: grid; grid-template: repeat(3, 30px) / repeat(6, 30px); place-items: center; }
.shapes svg { width: 20px; height: 20px; }
.more { flex: 1; margin: -1px; display: flex; align-items: center; justify-content: center; border: 1px solid #555; border-radius: 0 5px 5px 0; }
.arr { width: 60px; margin-left: 3px; }
.quick { width: 60px; margin-left: -2px; }
.quick > svg { margin: 0 0 -2px 4px; }
.g-draw .rows3 { margin-left: 7px; }
.g-edit { width: 143px; padding-left: 15px; }
.g-edit .label { padding-right: 15px; }
.rep { margin-left: 16px; }
.g-add { width: 76px; }
.g-add .big { width: 76px; }
.collapse { flex: 1; padding: 103px 0 0 16px; }

/* slide panel */
.work { height: 771px; flex: none; display: flex; }
.panel { width: 351px; display: flex; border-right: 1px solid #cdd2d6; }
.list { width: 326px; height: 771px; padding-top: 24px; overflow: hidden; display: flex; flex-direction: column; gap: 25px; }
.item { display: flex; flex: none; }
.item > span { width: 44px; padding-left: 15px; margin-top: -7px; font-size: 17.500px; line-height: 24px; color: #444; }
.thumb, .slide { font-family: "Liberation Serif", serif; letter-spacing: 0; background-color: #f5f2ea; overflow: hidden; }
.thumb { width: 257px; height: 145px; border-radius: 6px; outline: 1px solid #c3c1bf; outline-offset: -1px; }
.bt { font-weight: 700; }
.st { fill: #55524f; }
.sbar { width: 21px; margin-top: 3px; padding-top: 3px; display: flex; flex-direction: column; align-items: center; border-radius: 10px; background: #f4f4f4; fill: #6b6b6b; }
.sbar i { width: 11px; border-radius: 6px; background: #6e6e6e; }
.sbar.left { height: 767px; }
.sbar.left i { margin-top: 6px; height: 323px; }
.sbar .end { margin-top: auto; margin-bottom: 5px; }

/* editing area */
.editor { flex: 1; display: flex; flex-direction: column; }
.stage { height: 673px; display: flex; justify-content: space-between; padding-left: 174px; }
.slide {
  outline: 1px solid #c4c4c4;
  background-image: url("data:image/svg+xml,%3Csvg xmlns='http://www.w3.org/2000/svg' width='600' height='600'%3E%3Cfilter id='a' x='0' y='0' width='1' height='1'%3E%3CfeTurbulence type='fractalNoise' baseFrequency='.05 .5' numOctaves='2' seed='3' stitchTiles='stitch'/%3E%3CfeColorMatrix values='0 0 0 0 .6 0 0 0 0 .57 0 0 0 0 .5 .9 0 0 0 -.36'/%3E%3C/filter%3E%3Cfilter id='b' x='0' y='0' width='1' height='1'%3E%3CfeTurbulence type='fractalNoise' baseFrequency='.5 .05' numOctaves='2' seed='8' stitchTiles='stitch'/%3E%3CfeColorMatrix values='0 0 0 0 .6 0 0 0 0 .57 0 0 0 0 .5 .9 0 0 0 -.36'/%3E%3C/filter%3E%3Crect width='600' height='600' filter='url(%23a)' opacity='.4'/%3E%3Crect width='600' height='600' filter='url(%23b)' opacity='.4'/%3E%3C/svg%3E");
  background-color: #f9f6ef;
}
.pg { font-family: "Open Sans", sans-serif; font-weight: 600; fill: #464653; }
.rscroll { width: 21px; fill: #6b6b6b; }
.sbar.right { height: 603px; }
.sbar.right i { margin-top: 316px; width: 11px; height: 48px; }
.dbl { margin: 3px 0 0 4px; }
.notes { flex: 1; padding: 8px 0 0 13px; border-top: 1px solid #c9ced2; font-size: 16.600px; letter-spacing: 0.1px; color: #4a4a4a; margin-left: 1px; }

/* status bar */
.status {
  height: 28px;
  flex: none;
  padding-left: 15px;
  display: grid;
  grid-template-columns: 97px 40px 150px 22px 1063px 22px 59px 66px 50px 50px 41px 16px 131px 26px 47px 20px;
  align-items: center;
  justify-items: start;
  border-bottom: 1px solid #b1b7bc;
  background: #f4f4f4;
  font-size: 13.100px;
  letter-spacing: -0.25px;
}
.status b { letter-spacing: -0.15px; font-size: 12.800px; }
.view { width: 50px; height: 27px; display: flex; align-items: center; justify-content: center; background: #e0e0e0; }
.zoom { width: 125px; height: 14px; padding-left: 60px; background: linear-gradient(#666, #666) center / 100% 1px no-repeat; }
.zoom i { width: 6px; height: 14px; background: #666; }

/* taskbar */
.taskbar {
  height: 59px;
  flex: none;
  padding: 0 0 1px 28px;
  display: grid;
  grid-template-columns: 36px 466px 47px 289px 55px 55px 56px 54px 55px 56px 55px 54px 46px 165px 36px 40px 44px 51px 30px 30px 40px 90px 20px;
  align-items: center;
  justify-items: start;
  background: linear-gradient(90deg, #dce9f6, #e0e8f3 60%, #dceaf5);
  letter-spacing: -0.2px;
}
.taskbar > svg:first-child { margin-top: -9px; }
.weather, .lang, .clock { display: flex; flex-direction: column; font-size: 14.800px; line-height: 20px; }
.weather span + span { color: #555; }
.lang { width: 28px; align-items: center; }
.clock { width: 78px; align-items: flex-end; letter-spacing: 0; }
.pill {
  width: 274px; height: 39px;
  padding-left: 14px;
  display: flex; align-items: center;
  border: 1px solid #c9d3de; border-bottom-color: #b5bdc6; border-radius: 20px;
  background: #f6f9fc; color: #555; font-size: 16px;
}
.pill span { width: 179px; padding-left: 12px; }
.pill .ic { stroke: #222; }
.lift { margin-top: -7px; }
.chrome { width: 37px; height: 48px; padding-top: 2px; }
.chrome i { width: 8px; height: 4px; margin: 6px 0 0 11px; border-radius: 2px; background: #8a8d90; }
.running { width: 48px; height: 48px; padding: 9px 0 0 9px; border-radius: 5px; background: #f0f4fa; }
.running i { width: 20px; height: 4px; margin: 5px 0 0 5px; border-radius: 2px; background: #0a6fd0; }
```
